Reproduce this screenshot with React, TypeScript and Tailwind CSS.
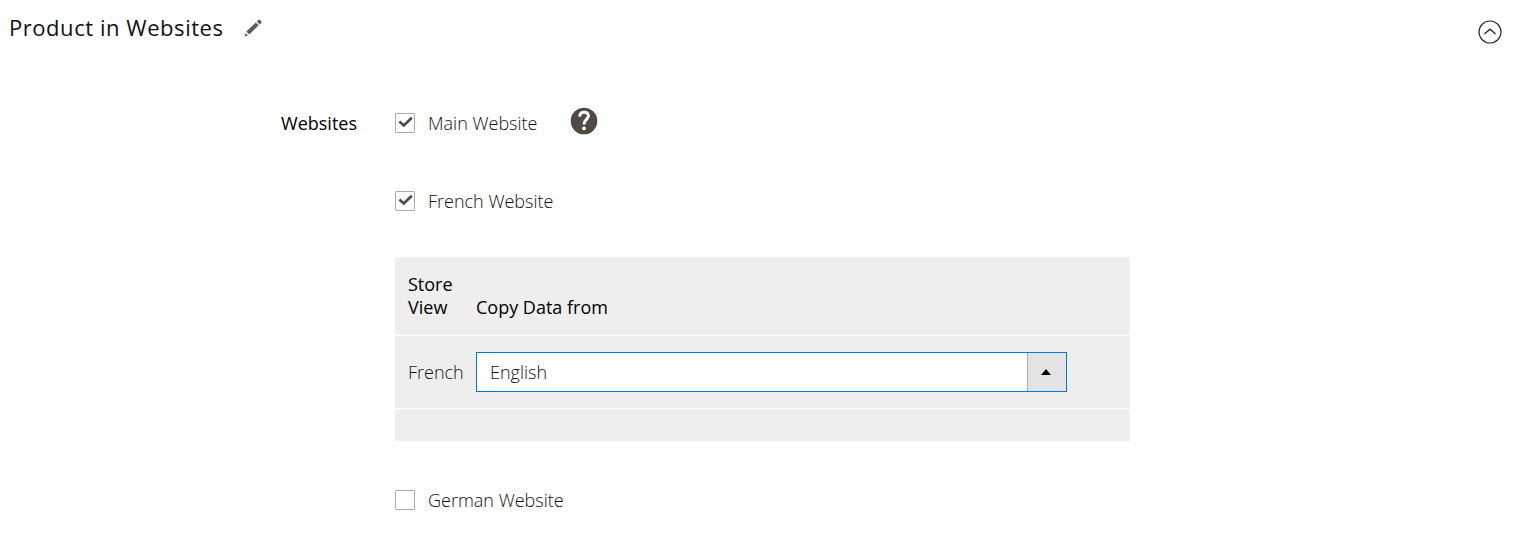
import { useState } from "react";

type WebsiteCheckboxProps = {
  id: string;
  label: string;
  defaultChecked?: boolean;
};

function WebsiteCheckbox({ id, label, defaultChecked = false }: WebsiteCheckboxProps) {
  return (
    <div className="flex h-6 items-center gap-[13px]">
      <span className="relative size-5 shrink-0">
        <input
          id={id}
          type="checkbox"
          defaultChecked={defaultChecked}
          className="peer block size-5 appearance-none rounded-[1px] border border-[#adadad] bg-white"
        />
        <svg
          viewBox="0 0 20 20"
          aria-hidden="true"
          className="pointer-events-none absolute inset-0 hidden size-5 peer-checked:block"
        >
          <path d="M4.4 8.6 8.8 12.4 16.8 4.8" fill="none" stroke="#514943" strokeWidth="2.7" />
        </svg>
      </span>
      <label htmlFor={id}>{label}</label>
    </div>
  );
}

function PencilIcon() {
  return (
    <svg viewBox="0 0 18 18" aria-hidden="true" className="size-[18px]" fill="#5f5b5e">
      <path d="M0.6 17.4 1.6 14 4 16.4Z" />
      <path d="M2.3 12.4 11.8 3.4 14.8 6.3 5.3 15.4Z" />
      <path d="M12.8 2.5 14.5 0.8Q15.1 0.3 15.7 0.8L17.4 2.5Q17.9 3.1 17.4 3.7L15.8 5.4Z" />
    </svg>
  );
}

function CollapseIcon() {
  return (
    <svg viewBox="0 0 24 24" aria-hidden="true" className="size-6" fill="none" stroke="#303030">
      <circle cx="12" cy="12" r="11" strokeWidth="1.2" />
      <path d="M6.4 14 12 9.2 17.6 14" strokeWidth="1.5" />
    </svg>
  );
}

function HelpIcon() {
  return (
    <svg viewBox="0 0 28 28" aria-hidden="true" className="size-7">
      <circle cx="14" cy="14" r="13.3" fill="#514943" />
      <path
        d="M9.6 9.6C9.8 6.5 11.6 5.2 14 5.2C16.8 5.2 18.4 6.8 18.4 9.1C18.4 12.5 14 12.6 14 17.4"
        fill="none"
        stroke="#fff"
        strokeWidth="3"
      />
      <circle cx="14" cy="21.4" r="1.9" fill="#fff" />
    </svg>
  );
}

export default function App() {
  const [source, setSource] = useState("English");

  return (
    <section className="bg-white pt-3 pr-3 pb-5 pl-[9px] font-['Open_Sans',sans-serif] text-[18px] leading-6 font-light text-[#111111]">
      <header className="flex items-start justify-between">
        <div className="flex h-[30px] items-center gap-5">
          <h2 className="text-[22px] font-medium tracking-wide">Product in Websites</h2>
          <button type="button" aria-label="Edit" className="pt-0.5">
            <PencilIcon />
          </button>
        </div>
        <button type="button" aria-label="Collapse section" aria-expanded="true" className="mt-2">
          <CollapseIcon />
        </button>
      </header>

      <fieldset
        aria-labelledby="websites-label"
        className="mt-[67px] grid grid-cols-[348px_minmax(0,735px)] gap-x-[38px]"
      >
        <div id="websites-label" className="text-right font-medium text-black">
          Websites
        </div>
        <div>
          <div className="flex h-6 items-center gap-[33px]">
            <WebsiteCheckbox id="site-main" label="Main Website" defaultChecked />
            <button type="button" aria-label="Help" className="mb-1">
              <HelpIcon />
            </button>
          </div>

          <div className="mt-[54px]">
            <WebsiteCheckbox id="site-french" label="French Website" defaultChecked />
          </div>

          <table className="mt-11 w-full border-collapse bg-[#eeeeee] text-left leading-[23px]">
            <thead>
              <tr className="border-b border-white align-bottom text-black">
                <th scope="col" className="w-[81px] py-4 pr-3 pl-[13px] font-medium">
                  Store View
                </th>
                <th scope="col" className="py-4 font-medium">
                  Copy Data from
                </th>
              </tr>
            </thead>
            <tbody>
              <tr className="border-b border-white">
                <td className="py-4 pl-[13px]">
                  <label htmlFor="copy-source">French</label>
                </td>
                <td className="py-4 pr-[63px]">
                  <div className="relative">
                    <select
                      id="copy-source"
                      value={source}
                      onChange={(event) => setSource(event.target.value)}
                      className="block h-10 w-full appearance-none border border-[#007bdb] bg-white pr-12 pl-[13px]"
                    >
                      <option>English</option>
                      <option>French</option>
                      <option>German</option>
                    </select>
                    <span className="pointer-events-none absolute inset-y-px right-px flex w-[39px] items-center justify-center border-l border-[#adadad] bg-[#e3e3e3] pr-0.5">
                      <svg viewBox="0 0 10 6" aria-hidden="true" className="h-1.5 w-2.5">
                        <path d="M5 0 10 6H0Z" fill="#000" />
                      </svg>
                    </span>
                  </div>
                </td>
              </tr>
              <tr className="h-8">
                <td colSpan={2} />
              </tr>
            </tbody>
          </table>

          <div className="mt-[47px]">
            <WebsiteCheckbox id="site-german" label="German Website" />
          </div>
        </div>
      </fieldset>
    </section>
  );
}
